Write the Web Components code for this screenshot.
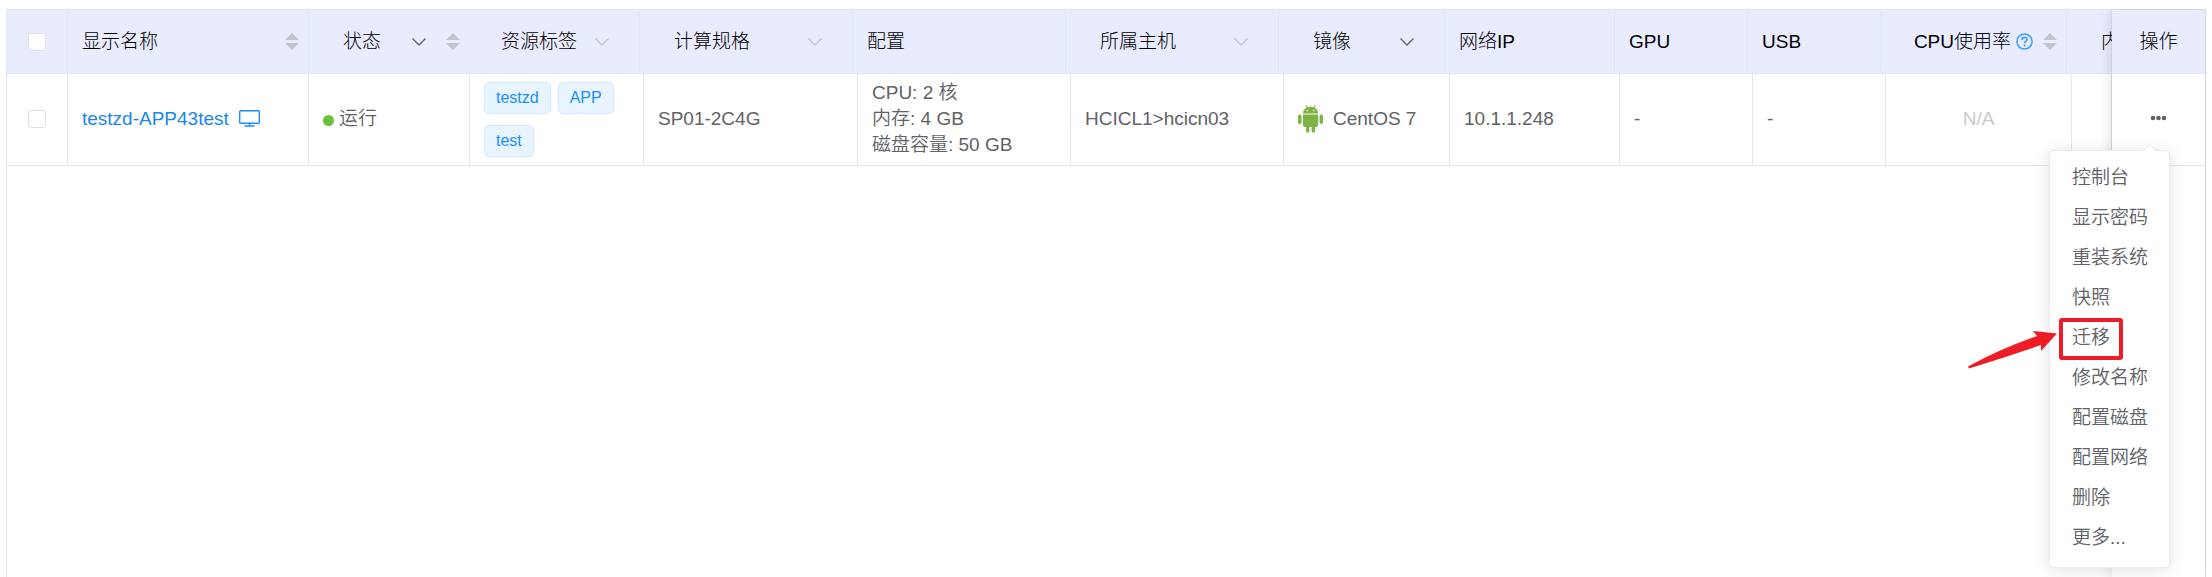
<!DOCTYPE html>
<html lang="zh-CN">
<head>
<meta charset="utf-8">
<title>云主机列表</title>
<style>
  body {
    margin: 9px 6px 0;
    background: #fff;
    color: #606266;
    font: 350 19px/26px "Liberation Sans", "Noto Sans CJK SC", sans-serif;
  }
</style>
</head>
<body>
<vm-table></vm-table>

<template id="t-check">
  <style>
    :host { display: block; height: 18px; }
    input {
      appearance: none; display: block; box-sizing: border-box;
      width: 18px; height: 18px; margin: 0 auto;
      border: 1px solid #dcdfe6; border-radius: 3px; background: #fff;
    }
  </style>
  <input type="checkbox">
</template>

<template id="t-sort">
  <style>
    :host { display: block; }
    button { display: block; border: 0; padding: 0; background: none; }
    svg { display: block; fill: #c0c4cc; }
  </style>
  <button type="button" aria-label="排序">
    <svg width="14" height="17" viewBox="0 0 14 17"><path d="M0 7 7 0l7 7zM0 10h14l-7 7z"/></svg>
  </button>
</template>

<template id="t-filter">
  <style>
    :host { display: block; color: #606266; }
    :host([muted]) { color: #c0c4cc; }
    button { display: block; border: 0; padding: 0; background: none; color: inherit; }
    svg { display: block; fill: none; stroke: currentColor; stroke-width: 1.3; }
  </style>
  <button type="button" aria-label="筛选">
    <svg width="14" height="8" viewBox="0 0 14 8"><path d="M.5.5 7 7 13.5.5"/></svg>
  </button>
</template>

<template id="t-head">
  <style>
    :host { display: flex; align-items: center; padding: 0 9px 0 14px; color: #000; font-weight: 300; white-space: nowrap; }
    :host([filterable]) { padding: 0 30px 0 34px; }
    :host([filterable][sortable]) { padding-right: 9px; }
    :host([align="end"]) { justify-content: flex-end; }
    :host([align="center"]) { justify-content: center; padding: 0; }
    .label { display: flex; align-items: center; gap: 5px; }
    .tools { display: flex; align-items: center; gap: 20px; margin-left: auto; }
    :host([align="end"]) .tools { margin-left: 10px; }
    :host([align="center"]) .tools { display: none; }
  </style>
  <span class="label"><slot></slot></span>
  <span class="tools"><slot name="tools"></slot></span>
</template>

<template id="t-help">
  <style>
    :host { display: block; }
    svg { display: block; fill: none; stroke: #409eff; }
  </style>
  <svg width="17" height="17" viewBox="0 0 17 17" role="img" aria-label="说明">
    <circle cx="8.5" cy="8.5" r="7.6" stroke-width="1.5"/>
    <path d="M6 6.8C6 5.2 7 4.3 8.5 4.3S11 5.2 11 6.5C11 8.1 8.6 8.2 8.6 10.3" stroke-width="1.8"/>
    <path d="M8.6 11.500v1.900" stroke-width="1.900"/>
  </svg>
</template>

<template id="t-tag">
  <style>
    :host {
      display: block; box-sizing: border-box; height: 32px; padding: 0 11px;
      border: 1px solid #d1e9ff; border-radius: 5px; background: #e8f4ff;
      color: #1890ff; font-size: 16px; line-height: 30px;
    }
  </style>
  <slot></slot>
</template>

<template id="t-status">
  <style>
    :host { display: flex; align-items: center; gap: 5px; }
    i { width: 11px; height: 11px; margin-top: 3px; border-radius: 50%; background: #67c23a; }
  </style>
  <i></i><span><slot></slot></span>
</template>

<template id="t-menu">
  <style>
    :host {
      display: block; box-sizing: border-box; width: 121px; padding: 7px 0 9px;
      border: 1px solid #e6ebf5; border-radius: 5px; background: #fff;
      box-shadow: 0 2px 16px rgba(0, 0, 0, .12);
    }
    .tip { position: absolute; top: -7px; left: 92px; display: block; }
    ul { margin: 0; padding: 0; list-style: none; }
  </style>
  <svg class="tip" width="16" height="8" viewBox="0 0 16 8"><path d="M1 8 8 1l7 7z" fill="#fff"/><path d="M1 7.5 8 .7l7 6.8" fill="none" stroke="#e6ebf5"/></svg>
  <ul role="menu"><slot></slot></ul>
</template>

<template id="t-item">
  <style>
    :host { display: block; position: relative; }
    button {
      display: block; width: 100%; height: 40px; padding: 0 0 0 22px; border: 0;
      background: none; color: inherit; font: inherit; text-align: left; white-space: nowrap;
    }
    .mark { display: none; }
    :host([marked]) .mark {
      display: block; position: absolute; top: 0; left: 9px; box-sizing: border-box;
      width: 64px; height: 42px; border: 4px solid #ee1c24; border-radius: 3px;
    }
    .mark svg { position: absolute; top: 9px; right: 61px; fill: #ee1c24; }
  </style>
  <button type="button" role="menuitem"><slot></slot></button>
  <span class="mark"><svg width="90" height="39" viewBox="0 0 90 39"><path d="M89 2.500 73 20v-6Q38 26 1 37.500L0 35.500Q32 18 69 5L65 0z"/></svg></span>
</template>

<template id="t-table">
  <style>
    :host {
      display: flex; box-sizing: border-box; min-height: calc(100vh - 9px);
      border: solid #dfe6ec; border-width: 1px 1px 0;
    }
    .scroll { flex: 1; min-width: 0; overflow: hidden; }
    .fixed { flex: 0 0 93px; position: relative; background: #fff; box-shadow: 0 0 13px rgba(0, 0, 0, .16); }
    table { width: 100%; border-collapse: separate; border-spacing: 0; table-layout: fixed; }
    .scroll table { min-width: 2103px; }
    th, td { box-sizing: border-box; padding: 0; border: solid #dfe6ec; border-width: 0 1px 1px 0; }
    th { height: 64px; background: #e9ecfe; font-weight: inherit; text-align: left; }
    th.open { border-right-color: transparent; }
    td { height: 92px; padding: 0 14px 2px; }
    td.pick { padding: 0 0 2px; }
    td.labels { padding-bottom: 0; }
    .fixed th, .fixed td { border-right: 0; }
    .fixed td { padding: 0 0 2px; }
    vm-head.near { padding-left: 31px; }
    .tags { display: flex; flex-wrap: wrap; gap: 11px 7px; }
    .name, .image { display: flex; align-items: center; gap: 10px; }
    a { color: #1787e8; text-decoration: none; }
    .none { color: #c8c9cc; text-align: center; }
    svg { display: block; flex: none; }
    .ops { position: relative; }
    .ops > button { display: block; width: 100%; padding: 10px 0 12px; border: 0; background: none; }
    .ops > button svg { margin: 0 auto; fill: #606266; }
    vm-menu { position: absolute; top: 45px; right: 35px; z-index: 2; }
  </style>

  <div class="scroll">
    <table>
      <colgroup>
        <col style="width:61px"><col style="width:241px"><col style="width:161px"><col style="width:170px">
        <col style="width:213px"><col style="width:213px"><col style="width:213px"><col style="width:166px">
        <col style="width:170px"><col style="width:133px"><col style="width:133px"><col style="width:186px"><col>
      </colgroup>
      <thead>
        <tr>
          <th><vm-check label="全选"></vm-check></th>
          <th><vm-head>显示名称<vm-sort slot="tools"></vm-sort></vm-head></th>
          <th class="open"><vm-head filterable sortable>状态<vm-filter slot="tools"></vm-filter><vm-sort slot="tools"></vm-sort></vm-head></th>
          <th><vm-head class="near" filterable>资源标签<vm-filter slot="tools" muted></vm-filter></vm-head></th>
          <th><vm-head filterable>计算规格<vm-filter slot="tools" muted></vm-filter></vm-head></th>
          <th><vm-head>配置</vm-head></th>
          <th><vm-head filterable>所属主机<vm-filter slot="tools" muted></vm-filter></vm-head></th>
          <th><vm-head filterable>镜像<vm-filter slot="tools"></vm-filter></vm-head></th>
          <th><vm-head>网络IP</vm-head></th>
          <th><vm-head>GPU</vm-head></th>
          <th><vm-head>USB</vm-head></th>
          <th><vm-head align="end">CPU使用率<vm-help></vm-help><vm-sort slot="tools"></vm-sort></vm-head></th>
          <th><vm-head filterable>内</vm-head></th>
        </tr>
      </thead>
    </table>
    <table>
      <colgroup>
        <col style="width:61px"><col style="width:241px"><col style="width:161px"><col style="width:174px">
        <col style="width:214px"><col style="width:213px"><col style="width:213px"><col style="width:166px">
        <col style="width:170px"><col style="width:133px"><col style="width:133px"><col style="width:186px"><col>
      </colgroup>
      <tbody>
        <tr>
          <td class="pick"><vm-check label="选择 testzd-APP43test"></vm-check></td>
          <td><div class="name"><a href="#detail">testzd-APP43test</a>
            <svg width="21" height="17" viewBox="0 0 21 17" fill="none" stroke="#1890ff" stroke-width="1.4"><rect x=".7" y=".7" width="19.6" height="12.6" rx="1"/><path d="M10.5 13.5V16M5.5 16h10"/></svg></div></td>
          <td><vm-status>运行</vm-status></td>
          <td class="labels"><div class="tags"><vm-tag>testzd</vm-tag><vm-tag>APP</vm-tag><vm-tag>test</vm-tag></div></td>
          <td>SP01-2C4G</td>
          <td><div>CPU: 2 核</div><div>内存: 4 GB</div><div>磁盘容量: 50 GB</div></td>
          <td>HCICL1&gt;hcicn03</td>
          <td><div class="image">
            <svg width="25" height="28" viewBox="0 0 25 28" fill="#7cb342"><path d="M5 8.500C5 5.500 6.500 3.800 8.500 2.800L7.200.8 8 .3l1.500 2q3-1 6 0L17 .3l.8.5-1.300 2C18.500 3.800 20 5.500 20 8.500z"/><path d="M5 9.500h15v10.500q0 2-2 2h-1v4q0 1.700-1.700 1.700T13.600 26v-4h-2.200v4q0 1.700-1.700 1.700T8 26v-4H7q-2 0-2-2z"/><rect x="0" y="9.500" width="3.500" height="9.500" rx="1.700"/><rect x="21.500" y="9.500" width="3.500" height="9.500" rx="1.700"/><circle cx="9.300" cy="5.500" r=".8" fill="#fff"/><circle cx="15.700" cy="5.500" r=".8" fill="#fff"/></svg>
            <span>CentOS 7</span></div></td>
          <td>10.1.1.248</td>
          <td>-</td>
          <td>-</td>
          <td class="none">N/A</td>
          <td></td>
        </tr>
      </tbody>
    </table>
  </div>

  <div class="fixed">
    <table>
      <thead><tr><th><vm-head align="center">操作</vm-head></th></tr></thead>
      <tbody><tr><td><div class="ops">
        <button type="button" aria-label="更多操作" aria-haspopup="menu"><svg width="17" height="6" viewBox="0 0 17 6"><circle cx="3" cy="3" r="2.3"/><circle cx="8.5" cy="3" r="2.3"/><circle cx="14" cy="3" r="2.3"/></svg></button>
        <vm-menu>
          <vm-item>控制台</vm-item>
          <vm-item>显示密码</vm-item>
          <vm-item>重装系统</vm-item>
          <vm-item>快照</vm-item>
          <vm-item marked>迁移</vm-item>
          <vm-item>修改名称</vm-item>
          <vm-item>配置磁盘</vm-item>
          <vm-item>配置网络</vm-item>
          <vm-item>删除</vm-item>
          <vm-item>更多...</vm-item>
        </vm-menu>
      </div></td></tr></tbody>
    </table>
  </div>
</template>

<script>
  class Base extends HTMLElement {
    constructor() {
      super();
      const tpl = document.getElementById(this.constructor.template);
      this.attachShadow({ mode: 'open' }).append(document.importNode(tpl.content, true));
    }
  }
  class VmCheck extends Base {
    static template = 't-check';
    connectedCallback() {
      this.shadowRoot.querySelector('input').setAttribute('aria-label', this.getAttribute('label'));
    }
  }
  class VmSort extends Base { static template = 't-sort'; }
  class VmFilter extends Base { static template = 't-filter'; }
  class VmHead extends Base { static template = 't-head'; }
  class VmHelp extends Base { static template = 't-help'; }
  class VmTag extends Base { static template = 't-tag'; }
  class VmStatus extends Base { static template = 't-status'; }
  class VmItem extends Base { static template = 't-item'; }
  class VmMenu extends Base { static template = 't-menu'; }
  class VmTable extends Base { static template = 't-table'; }
  customElements.define('vm-check', VmCheck);
  customElements.define('vm-sort', VmSort);
  customElements.define('vm-filter', VmFilter);
  customElements.define('vm-head', VmHead);
  customElements.define('vm-help', VmHelp);
  customElements.define('vm-tag', VmTag);
  customElements.define('vm-status', VmStatus);
  customElements.define('vm-item', VmItem);
  customElements.define('vm-menu', VmMenu);
  customElements.define('vm-table', VmTable);
</script>
</body>
</html>
